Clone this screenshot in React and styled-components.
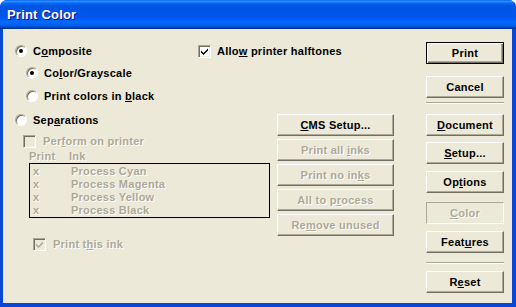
import React from "react";
import styled, { createGlobalStyle, css } from "styled-components";

const Global = createGlobalStyle`
  html, body { margin: 0; padding: 0; background: #ffffff; }
  body { font-family: "Liberation Sans", Arial, sans-serif; }
`;

const Window = styled.div`
  width: 516px;
  height: 307px;
  display: flex;
  flex-direction: column;
  border-radius: 7px 7px 0 0;
  overflow: hidden;
  background: #0054e3;
`;

const TitleBar = styled.div`
  height: 29px;
  flex: none;
  display: flex;
  align-items: center;
  padding-left: 7px;
  background: linear-gradient(
    to bottom,
    #0058ee 0%, #3593ff 4%, #288eff 6%, #127dff 8%, #036ffc 10%,
    #0262ee 14%, #0057e5 20%, #0054e3 24%, #0055eb 56%, #005bf5 66%,
    #026afe 76%, #0062ef 86%, #0052d6 92%, #0040ab 94%, #003092 100%
  );
`;

const Title = styled.span`
  color: #fff;
  font: bold 13px "Liberation Sans", Arial, sans-serif;
  text-shadow: 1px 1px #0f1089;
  letter-spacing: 0.2px;
`;

const Frame = styled.div`
  flex: 1;
  display: flex;
  border-style: solid;
  border-color: #0847d8;
  border-width: 0 4px 4px 3px;
  box-shadow: inset 0 1px 0 #0831d9;
`;

const Body = styled.div`
  flex: 1;
  display: flex;
  background: #ece9d8;
  font: bold 11px "Liberation Sans", Arial, sans-serif;
  letter-spacing: 0.25px;
  color: #000;
`;

const Main = styled.div`
  width: 423px;
  padding-left: 12px;
  box-sizing: border-box;
  display: flex;
  flex-direction: column;
`;

const TopSection = styled.div`
  display: flex;
  align-items: flex-start;
  padding-top: 14px;
`;

const RadioGroup = styled.div`
  width: 183px;
  display: flex;
  flex-direction: column;
`;

const BottomSection = styled.div`
  display: flex;
  margin-top: 8px;
`;

const SepGroup = styled.div`
  width: 262px;
  display: flex;
  flex-direction: column;
`;

const Row = styled.div`
  display: flex;
  align-items: center;
  height: 16px;
  line-height: 16px;
  margin-top: ${(p) => p.$mt || 0}px;
  margin-left: ${(p) => p.$indent || 0}px;
  gap: ${(p) => p.$gap || 6}px;
  white-space: nowrap;
`;

const disabledText = css`
  color: #aca899;
  text-shadow: 1px 1px #ffffff;
`;

const Label = styled.span`
  ${(p) => p.$disabled && disabledText}
  u { text-underline-offset: 1px; }
`;

const RadioCircle = styled.span`
  width: 12px;
  height: 12px;
  box-sizing: border-box;
  border-radius: 50%;
  border: 1px solid;
  border-color: #aca899 #ffffff #ffffff #aca899;
  box-shadow: inset 1px 1px 0 #716f64;
  background: #fff;
  display: flex;
  align-items: center;
  justify-content: center;
  flex: none;
  &::after {
    content: "";
    width: 4px;
    height: 4px;
    border-radius: 50%;
    background: ${(p) => (p.$checked ? "#000" : "transparent")};
  }
`;

const CheckBox = styled.span`
  width: 13px;
  height: 13px;
  box-sizing: border-box;
  border: 1px solid;
  border-color: #aca899 #ffffff #ffffff #aca899;
  box-shadow: inset 1px 1px 0 #716f64, inset -1px -1px 0 #f1efe2;
  background: ${(p) => (p.$disabled ? "#ece9d8" : "#fff")};
  display: flex;
  align-items: center;
  justify-content: center;
  flex: none;
  svg { display: block; }
`;

const Header = styled.div`
  display: flex;
  height: 14px;
  line-height: 14px;
  margin-left: 14px;
  ${disabledText}
`;

const HeaderCell = styled.span`
  width: ${(p) => p.$w}px;
`;

const ListBox = styled.div`
  margin-left: 14px;
  width: 241px;
  height: 55px;
  box-sizing: border-box;
  border: 1px solid #000;
  padding: 1px 0 0 3px;
  display: flex;
  flex-direction: column;
`;

const ListRow = styled.div`
  display: flex;
  height: 13px;
  line-height: 13px;
  ${disabledText}
`;

const ListCell = styled.span`
  width: ${(p) => p.$w}px;
  flex: none;
`;

const MidButtons = styled.div`
  width: 117px;
  margin-top: 2px;
  display: flex;
  flex-direction: column;
  gap: 3px;
`;

const RightCol = styled.div`
  width: 78px;
  display: flex;
  flex-direction: column;
`;

const Button = styled.div`
  height: 22px;
  box-sizing: border-box;
  margin-top: ${(p) => p.$mt || 0}px;
  display: flex;
  align-items: center;
  justify-content: center;
  background: #ece9d8;
  white-space: nowrap;
  border: 1px solid;
  border-color: #ffffff #716f64 #716f64 #ffffff;
  box-shadow: inset -1px -1px 0 #aca899;
  ${(p) => p.$disabled && disabledText}
  ${(p) =>
    p.$default &&
    css`
      border: 1px solid #000;
      box-shadow: inset 1px 1px 0 #ffffff, inset -1px -1px 0 #716f64,
        inset -2px -2px 0 #aca899;
    `}
  ${(p) =>
    p.$sunken &&
    css`
      border-color: #aca899 #ffffff #ffffff #aca899;
      box-shadow: none;
    `}
  u { text-underline-offset: 1px; }
`;

const Separator = styled.div`
  height: 1px;
  margin-top: ${(p) => p.$mt || 0}px;
  background: #aca899;
  border-bottom: 1px solid #ffffff;
`;

const Check = ({ color = "#000" }) => (
  <svg width="9" height="9" viewBox="0 0 9 9">
    <path d="M1 3.5 L3.5 6 L8 1.5 L8 3.5 L3.5 8 L1 5.5 Z" fill={color} />
  </svg>
);

const Radio = ({ checked, children, mt, indent }) => (
  <Row $mt={mt} $indent={indent}>
    <RadioCircle $checked={checked} />
    <Label>{children}</Label>
  </Row>
);

const inks = ["Process Cyan", "Process Magenta", "Process Yellow", "Process Black"];

export default function App() {
  return (
    <>
      <Global />
      <Window>
        <TitleBar>
          <Title>Print Color</Title>
        </TitleBar>
        <Frame>
          <Body>
            <Main>
              <TopSection>
                <RadioGroup>
                  <Radio checked>
                    C<u>o</u>mposite
                  </Radio>
                  <Radio checked mt={6} indent={11}>
                    Co<u>l</u>or/Grayscale
                  </Radio>
                  <Radio mt={7} indent={11}>
                    Print colors in <u>b</u>lack
                  </Radio>
                </RadioGroup>
                <Row>
                  <CheckBox>
                    <Check />
                  </CheckBox>
                  <Label>
                    Allo<u>w</u> printer halftones
                  </Label>
                </Row>
              </TopSection>
              <BottomSection>
                <SepGroup>
                  <Radio>
                    Sep<u>a</u>rations
                  </Radio>
                  <Row $mt={5} $indent={8} $gap={7}>
                    <CheckBox $disabled />
                    <Label $disabled>
                      Per<u>f</u>orm on printer
                    </Label>
                  </Row>
                  <Header>
                    <HeaderCell $w={40}>Print</HeaderCell>
                    <HeaderCell $w={40}>Ink</HeaderCell>
                  </Header>
                  <ListBox>
                    {inks.map((ink) => (
                      <ListRow key={ink}>
                        <ListCell $w={38}>x</ListCell>
                        <ListCell>{ink}</ListCell>
                      </ListRow>
                    ))}
                  </ListBox>
                  <Row $mt={18} $indent={18} $gap={7}>
                    <CheckBox $disabled>
                      <Check color="#aca899" />
                    </CheckBox>
                    <Label $disabled>
                      Print t<u>h</u>is ink
                    </Label>
                  </Row>
                </SepGroup>
                <MidButtons>
                  <Button>
                    <span>
                      <u>C</u>MS Setup...
                    </span>
                  </Button>
                  <Button $disabled>
                    <span>
                      Print all <u>i</u>nks
                    </span>
                  </Button>
                  <Button $disabled>
                    <span>
                      Print no in<u>k</u>s
                    </span>
                  </Button>
                  <Button $disabled>
                    <span>
                      All to p<u>r</u>ocess
                    </span>
                  </Button>
                  <Button $disabled>
                    <span>
                      Re<u>m</u>ove unused
                    </span>
                  </Button>
                </MidButtons>
              </BottomSection>
            </Main>
            <RightCol>
              <Button $default $mt={13}>Print</Button>
              <Button $mt={12}>Cancel</Button>
              <Separator $mt={4} />
              <Button $mt={10}>
                <span>
                  <u>D</u>ocument
                </span>
              </Button>
              <Button $mt={6}>
                <span>
                  <u>S</u>etup...
                </span>
              </Button>
              <Button $mt={7}>
                <span>
                  Op<u>t</u>ions
                </span>
              </Button>
              <Button $mt={9} $disabled $sunken>
                <span>
                  <u>C</u>olor
                </span>
              </Button>
              <Button $mt={7}>
                <span>
                  Feat<u>u</u>res
                </span>
              </Button>
              <Separator $mt={9} />
              <Button $mt={7}>
                <span>
                  R<u>e</u>set
                </span>
              </Button>
            </RightCol>
          </Body>
        </Frame>
      </Window>
    </>
  );
}
